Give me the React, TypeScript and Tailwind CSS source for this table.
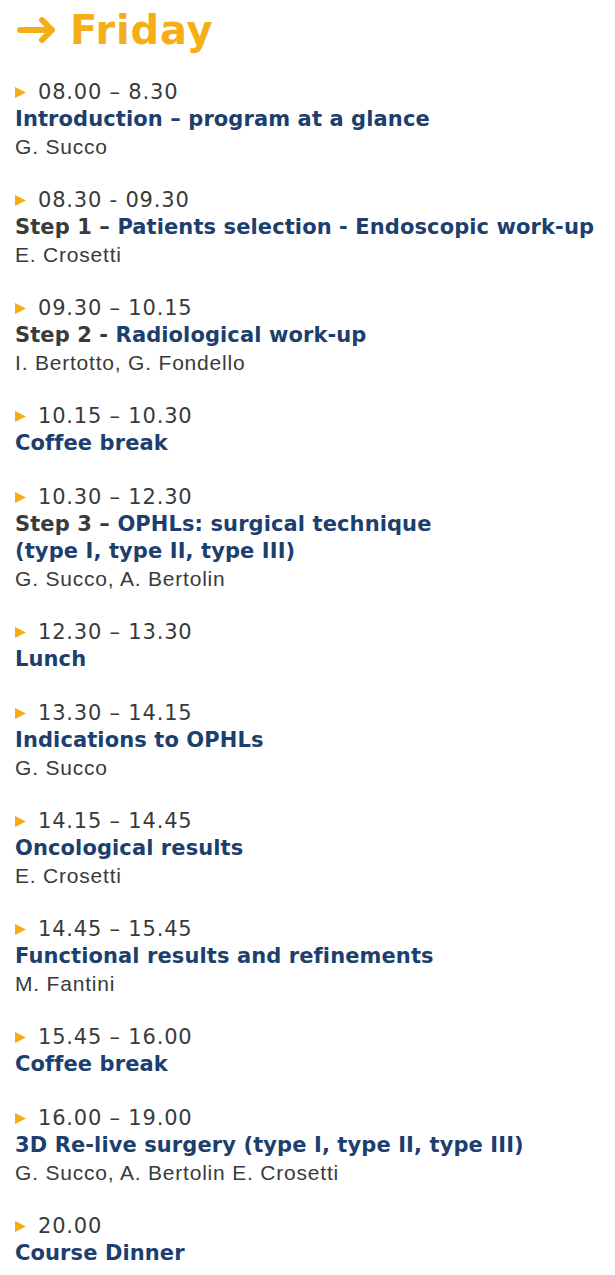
const items: { time: string; step?: string; title: string[]; who?: string }[] = [
  { time: '08.00 – 8.30', title: ['Introduction – program at a glance'], who: 'G. Succo' },
  { time: '08.30 - 09.30', step: 'Step 1 – ', title: ['Patients selection - Endoscopic work-up'], who: 'E. Crosetti' },
  { time: '09.30 – 10.15', step: 'Step 2 - ', title: ['Radiological work-up'], who: 'I. Bertotto, G. Fondello' },
  { time: '10.15 – 10.30', title: ['Coffee break'] },
  { time: '10.30 – 12.30', step: 'Step 3 – ', title: ['OPHLs: surgical technique', '(type I, type II, type III)'], who: 'G. Succo, A. Bertolin' },
  { time: '12.30 – 13.30', title: ['Lunch'] },
  { time: '13.30 – 14.15', title: ['Indications to OPHLs'], who: 'G. Succo' },
  { time: '14.15 – 14.45', title: ['Oncological results'], who: 'E. Crosetti' },
  { time: '14.45 – 15.45', title: ['Functional results and refinements'], who: 'M. Fantini' },
  { time: '15.45 – 16.00', title: ['Coffee break'] },
  { time: '16.00 – 19.00', title: ['3D Re-live surgery (type I, type II, type III)'], who: 'G. Succo, A. Bertolin E. Crosetti' },
  { time: '20.00', title: ['Course Dinner'] },
];

export default function App() {
  return (
    <main className="min-h-screen bg-white pl-[15px] pt-[8px] font-['Liberation_Sans',Arial,sans-serif]">
      <h1 className="flex items-center gap-[13px] font-['DejaVu_Sans',sans-serif] text-[40px] font-bold leading-[44px] tracking-[0.8px] text-[#f5ae17]">
        <svg width="40" height="26" viewBox="0 0 40 26" className="ml-[2px]">
          <path d="M3 13 H35 M25 3 L35 13 L25 23" fill="none" stroke="#f5ae17" strokeWidth="6" strokeLinecap="round" strokeLinejoin="round" />
        </svg>
        Friday
      </h1>
      <div className="mt-[27px] text-[21px] leading-[27px]">
        {items.map((it) => (
          <div key={it.time} className="mb-[27px]">
            <div className="flex items-center font-['DejaVu_Sans',sans-serif] tracking-[0.8px] text-[#3a3a3a]">
              <svg width="11" height="11" viewBox="0 0 11 11" className="mr-[12px] shrink-0">
                <path d="M0 0 L11 5.5 L0 11 Z" fill="#f5ae17" />
              </svg>
              {it.time}
            </div>
            <div className="font-['DejaVu_Sans',sans-serif] font-bold tracking-[0.1px] text-[#1c3f6e]">
              {it.step && <span className="text-[#3a3a3a]">{it.step}</span>}
              {it.title.map((t, i) => (
                <span key={i}>
                  {i > 0 && <br />}
                  {t}
                </span>
              ))}
            </div>
            {it.who && <div className="tracking-[0.8px] text-[#3a3a3a]">{it.who}</div>}
          </div>
        ))}
      </div>
    </main>
  );
}
